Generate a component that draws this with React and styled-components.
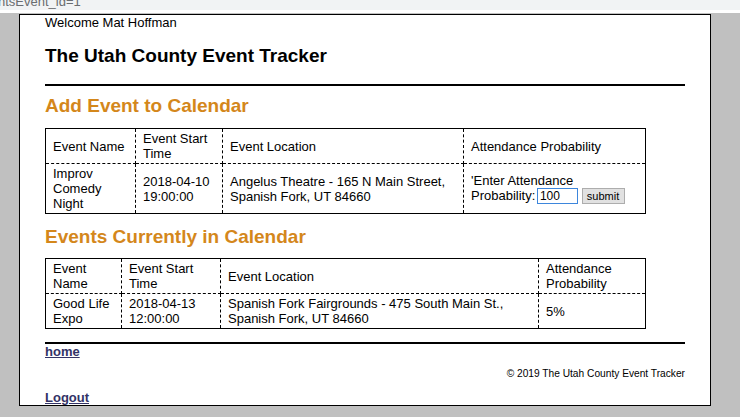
import React from "react";
import styled, { createGlobalStyle } from "styled-components";

const Global = createGlobalStyle`
  html, body { margin: 0; padding: 0; background: #c0c0c0; }
  body { font-family: "Liberation Sans", Arial, sans-serif; color: #000; }
`;

const BrowserStrip = styled.div`
  height: 10px;
  background: #f1f3f4;
  overflow: hidden;
  display: flex;
  align-items: flex-end;
  border-bottom: 3px solid #ffffff;
`;

const StripText = styled.span`
  font-size: 13px;
  line-height: 14px;
  color: #6a6d70;
  white-space: nowrap;
  margin-left: -2px;
  transform: translateY(-1px);
`;

const Page = styled.div`
  box-sizing: border-box;
  background: #c0c0c0;
  min-height: calc(100vh - 13px);
  padding-top: 1px;
`;

const Container = styled.div`
  width: 640px;
  margin-left: 19px;
  background: #fff;
  border: 1px solid #000;
  padding: 0 25px;
`;

const Welcome = styled.div`
  font-size: 13px;
  line-height: 15px;
`;

const Title = styled.h1`
  margin: 15px 0 0;
  font-size: 19px;
  line-height: 22px;
  font-weight: bold;
`;

const Rule = styled.hr`
  margin: ${(p) => p.$top}px 0 0;
  border: none;
  height: 2px;
  background: #000;
`;

const SectionHeading = styled.h2`
  margin: ${(p) => p.$top}px 0 0;
  font-size: 19px;
  line-height: 22px;
  font-weight: bold;
  color: #d4871b;
`;

const Table = styled.table`
  margin-top: ${(p) => p.$top}px;
  width: 600px;
  border-collapse: collapse;
  table-layout: fixed;
  border: 1px solid #000;
  font-size: 13px;
  line-height: 15px;
`;

const Col = styled.col`
  width: ${(p) => p.$w}px;
`;

const HeadCell = styled.th`
  font-weight: normal;
  text-align: left;
  vertical-align: middle;
  padding: 2px 7px;
  border: 1px dashed #000;
`;

const Cell = styled.td`
  vertical-align: middle;
  padding: 2px 7px;
  border: 1px dashed #000;
`;

const ProbInput = styled.input`
  box-sizing: border-box;
  width: 41px;
  height: 16px;
  padding: 0 2px;
  margin: 0 0 0 -2px;
  border: 1px solid #3d86dc;
  font-family: "Liberation Sans", Arial, sans-serif;
  font-size: 12px;
  color: #000;
  vertical-align: middle;
  outline: none;
`;

const SubmitButton = styled.button`
  box-sizing: border-box;
  width: 43px;
  height: 16px;
  margin: 0 0 0 0;
  padding: 0;
  background: #e1e1e1;
  border: 1px solid #adadad;
  font-family: "Liberation Sans", Arial, sans-serif;
  font-size: 11px;
  line-height: 14px;
  color: #000;
  vertical-align: middle;
`;

const NavLink = styled.a`
  display: block;
  margin-top: ${(p) => p.$top || 0}px;
  font-size: 13px;
  line-height: 15px;
  font-weight: bold;
  color: #333366;
  text-decoration: underline;
  width: fit-content;
`;

const Copyright = styled.div`
  margin-top: 9px;
  font-size: 10.2px;
  line-height: 12px;
  text-align: right;
`;

const addCols = [90, 87, 241, 182];
const listCols = [76, 99, 318, 107];

export default function App() {
  return (
    <>
      <Global />
      <BrowserStrip>
        <StripText>ntsEvent_id=1</StripText>
      </BrowserStrip>
      <Page>
        <Container>
          <Welcome>Welcome Mat Hoffman</Welcome>
          <Title>The Utah County Event Tracker</Title>
          <Rule $top={17} />
          <SectionHeading $top={9}>Add Event to Calendar</SectionHeading>
          <Table $top={11}>
            <colgroup>
              {addCols.map((w, i) => (
                <Col key={i} $w={w} />
              ))}
            </colgroup>
            <thead>
              <tr>
                <HeadCell>Event Name</HeadCell>
                <HeadCell>Event Start Time</HeadCell>
                <HeadCell>Event Location</HeadCell>
                <HeadCell>Attendance Probability</HeadCell>
              </tr>
            </thead>
            <tbody>
              <tr>
                <Cell>Improv Comedy Night</Cell>
                <Cell>
                  2018-04-10
                  <br />
                  19:00:00
                </Cell>
                <Cell>Angelus Theatre - 165 N Main Street, Spanish Fork, UT 84660</Cell>
                <Cell>
                  'Enter Attendance
                  <br />
                  Probability: <ProbInput defaultValue="100" />{" "}
                  <SubmitButton type="button">submit</SubmitButton>
                </Cell>
              </tr>
            </tbody>
          </Table>
          <SectionHeading $top={12}>Events Currently in Calendar</SectionHeading>
          <Table $top={10}>
            <colgroup>
              {listCols.map((w, i) => (
                <Col key={i} $w={w} />
              ))}
            </colgroup>
            <thead>
              <tr>
                <HeadCell>Event Name</HeadCell>
                <HeadCell>Event Start Time</HeadCell>
                <HeadCell>Event Location</HeadCell>
                <HeadCell>Attendance Probability</HeadCell>
              </tr>
            </thead>
            <tbody>
              <tr>
                <Cell>Good Life Expo</Cell>
                <Cell>
                  2018-04-13
                  <br />
                  12:00:00
                </Cell>
                <Cell>
                  Spanish Fork Fairgrounds - 475 South Main St.,
                  <br />
                  Spanish Fork, UT 84660
                </Cell>
                <Cell>5%</Cell>
              </tr>
            </tbody>
          </Table>
          <Rule $top={13} />
          <NavLink href="#">home</NavLink>
          <Copyright>© 2019 The Utah County Event Tracker</Copyright>
          <NavLink href="#" $top={10}>
            Logout
          </NavLink>
        </Container>
      </Page>
    </>
  );
}
